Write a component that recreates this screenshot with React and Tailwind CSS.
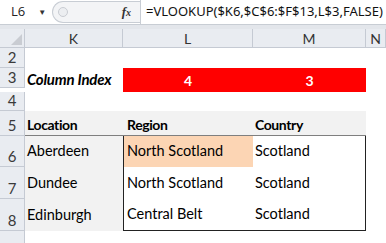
import React from 'react'

const cols = ['K', 'L', 'M', 'N']
const rowHeights = { 2: 'h-[20px]', 3: 'h-[20px]', 4: 'h-[19px]', 5: 'h-[25px]', 6: 'h-[31px]', 7: 'h-[32px]', 8: 'h-[32px]', 9: 'h-[16px]' }

function RowHead({ n }) {
  return (
    <div className={`${rowHeights[n]} bg-[#e9ecf1] border-b border-r border-[#c5cad3] flex items-end justify-center text-[15px] leading-none pb-[2px] text-[#3a3a3a]`}>
      {n === 9 ? '' : n}
    </div>
  )
}

export default function App() {
  return (
    <div className="w-[386px] h-[243px] overflow-hidden bg-white" style={{ fontFamily: '"Open Sans", "Noto Sans", sans-serif' }}>
      {/* formula bar */}
      <div className="h-[25px] flex items-stretch border-b border-[#c8cdd4] bg-white">
        <div className="w-[52px] flex items-center pl-[11px] text-[13px] text-[#222]">
          <span>L6</span>
          <span className="ml-[13px] text-[8px] text-[#333]">▼</span>
        </div>
        <div className="w-[88px] flex items-center bg-[#f3f4f6] rounded-l-[12px] border-l border-t border-b border-[#c8cdd4] my-[1px]">
          <div className="ml-[5px] w-[10px] h-[10px] rounded-full border border-[#c9ccd2] bg-[#eceef1]" />
          <span className="ml-auto mr-[9px] italic font-bold text-[13px] text-[#333]" style={{ fontFamily: '"Liberation Serif", serif' }}>
            f<span className="text-[10px]">x</span>
          </span>
        </div>
        <div className="flex-1 flex items-center pl-[5px] text-[13px] text-[#111] border-l border-[#c8cdd4] whitespace-nowrap" style={{ fontFamily: '"Noto Sans", sans-serif' }}>
          =VLOOKUP($K6,$C$6:$F$13,L$3,FALSE)
        </div>
      </div>
      <div className="h-[4px] bg-[#e3e6eb]" />

      <div className="grid grid-cols-[25px_98px_130px_113px_20px]" style={{ fontFamily: 'Lato, "Open Sans", sans-serif' }}>
        {/* column headers */}
        <div className="h-[19px] bg-[#e9ecf1] border-r border-b border-[#c5cad3] relative">
          <div className="absolute right-[2px] bottom-[2px] w-0 h-0 border-l-[11px] border-l-transparent border-b-[11px] border-b-[#c9ccd2]" />
        </div>
        {cols.map(c => (
          <div key={c} className="h-[19px] bg-[#e9ecf1] border-r border-b border-[#c5cad3] flex items-center justify-center text-[14px] text-[#333]">
            {c}
          </div>
        ))}

        {/* row 2 */}
        <RowHead n={2} />
        <div className="col-span-4" />

        {/* row 3 */}
        <RowHead n={3} />
        <div className="flex items-end pl-[2px] pb-[1px] text-[15px] font-bold italic text-black tracking-[-0.2px]">Column Index</div>
        <div className="bg-[#ff0000] flex items-end justify-center pb-[1px] text-white font-bold text-[14px]">4</div>
        <div className="bg-[#ff0000] flex items-end justify-center pb-[1px] text-white font-bold text-[14px]">3</div>
        <div />

        {/* row 5 */}
        <RowHead n={4} />
        <div className="col-span-4" />

        <RowHead n={5} />
        <div className="bg-[#f2f2f2] border-b border-[#7f7f7f] flex items-end pl-[2px] text-[14px] font-bold text-black tracking-[-0.4px]">Location</div>
        <div className="bg-[#f2f2f2] border-b border-[#7f7f7f] flex items-end pl-[4px] text-[14px] font-bold text-black tracking-[-0.4px]">Region</div>
        <div className="bg-[#f2f2f2] border-b border-[#7f7f7f] flex items-end pl-[2px] text-[14px] font-bold text-black tracking-[-0.4px]">Country</div>
        <div />

        {/* rows 6-8 */}
        {[
          [6, 'Aberdeen', 'North Scotland', 'Scotland'],
          [7, 'Dundee', 'North Scotland', 'Scotland'],
          [8, 'Edinburgh', 'Central Belt', 'Scotland'],
        ].map(([n, loc, reg, cty]) => (
          <React.Fragment key={n}>
            <RowHead n={n} />
            <div className="bg-[#f2f2f2] flex items-end pl-[2px] pb-[5px] text-[14.5px] text-black">{loc}</div>
            <div className={`${n === 6 ? 'bg-[#fcd5b4]' : 'bg-white'} border-l border-[#222] ${n === 8 ? 'border-b' : ''} flex items-end pl-[3px] pb-[5px] text-[14.5px] text-black`}>{reg}</div>
            <div className={`bg-white border-r border-[#222] ${n === 8 ? 'border-b' : ''} flex items-end pl-[2px] pb-[5px] text-[14.5px] text-black`}>{cty}</div>
            <div />
          </React.Fragment>
        ))}

        <RowHead n={9} />
        <div className="col-span-4" />
      </div>
    </div>
  )
}
